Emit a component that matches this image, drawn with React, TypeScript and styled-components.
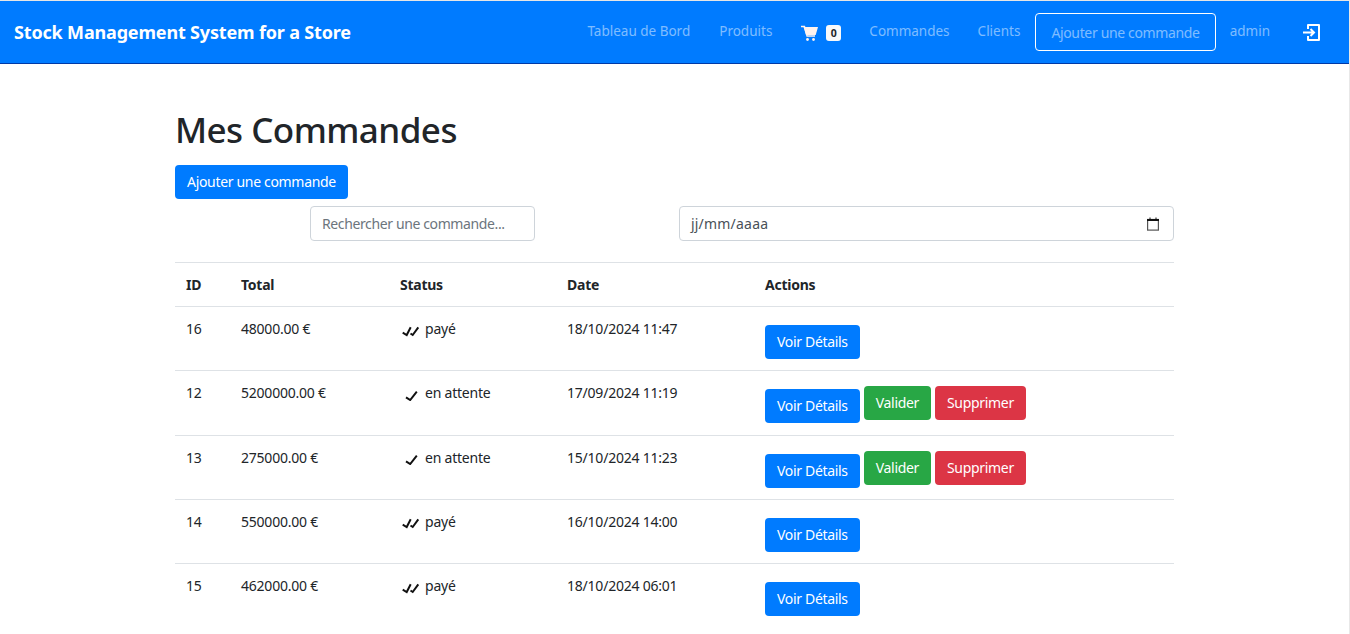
import React from "react";
import styled, { createGlobalStyle } from "styled-components";

type Order = {
  id: number;
  total: string;
  paid: boolean;
  date: string;
};

const orders: Array<Order> = [
  { id: 16, total: "48000.00 €", paid: true, date: "18/10/2024 11:47" },
  { id: 12, total: "5200000.00 €", paid: false, date: "17/09/2024 11:19" },
  { id: 13, total: "275000.00 €", paid: false, date: "15/10/2024 11:23" },
  { id: 14, total: "550000.00 €", paid: true, date: "16/10/2024 14:00" },
  { id: 15, total: "462000.00 €", paid: true, date: "18/10/2024 06:01" },
];

const GlobalStyle = createGlobalStyle`
  html, body {
    margin: 0;
    height: 634px;
    overflow: hidden;
    background: #fff;
  }
  body {
    font-family: "Noto Sans", "Open Sans", sans-serif;
    font-size: 14px;
    color: #212529;
    border-right: 1px solid #e8e8e8;
    border-top: 1px solid #e6e6e6;
    box-sizing: border-box;
  }
`;

const Navbar = styled.nav`
  display: flex;
  align-items: center;
  height: 62px;
  padding: 0 14px;
  background: #007bff;
  border-bottom: 1px solid #0039a6;
`;

const Brand = styled.a`
  font-size: 18px;
  font-weight: 700;
  letter-spacing: -0.17px;
  color: #fff;
  margin-right: auto;
`;

const NavLink = styled.a<{ $pull?: number }>`
  color: rgba(255, 255, 255, 0.5);
  font-size: 13.5px;
  margin-bottom: 3px;
  margin-left: ${(props) => props.$pull || 0}px;
`;

const CartLink = styled.span`
  display: flex;
  align-items: center;
  gap: 8px;
  margin-top: 2px;
`;

const Badge = styled.span`
  background: #f8f9fa;
  color: #212529;
  font-size: 10.5px;
  font-weight: 700;
  border-radius: 3px;
  width: 15px;
  height: 16px;
  display: flex;
  align-items: center;
  justify-content: center;
`;

const NavItems = styled.div`
  display: flex;
  align-items: center;
  gap: 29px;
`;

const OutlineButton = styled.a`
  color: rgba(255, 255, 255, 0.5);
  letter-spacing: -0.35px;
  border: 1px solid #fff;
  border-radius: 4px;
  padding: 0 15px;
  height: 36px;
  display: flex;
  align-items: center;
  margin-left: -14px;
  margin-right: -15px;
`;

const LoginLink = styled.span`
  display: flex;
  margin-left: 4px;
  margin-right: 15px;
`;

const Main = styled.main`
  margin-left: 175px;
  width: 999px;
`;

const Title = styled.h1`
  font-size: 35px;
  font-weight: 500;
  letter-spacing: -0.55px;
  line-height: 43px;
  margin: 44px 0 14px;
`;

const Button = styled.button<{ $color: string; $top?: number }>`
  background: ${(props) => props.$color};
  color: #fff;
  border: 0;
  border-radius: 4px;
  height: 34px;
  padding: 0 12px 1px;
  font: inherit;
  letter-spacing: -0.32px;
  margin-top: ${(props) => props.$top || 0}px;
`;

const Filters = styled.div`
  display: flex;
  margin-top: 7px;
  margin-bottom: 21px;
`;

const SearchInput = styled.input`
  box-sizing: border-box;
  width: 225px;
  height: 35px;
  margin-left: 135px;
  margin-right: 144px;
  padding: 0 11px;
  border: 1px solid #ced4da;
  border-radius: 4px;
  font: inherit;
  letter-spacing: -0.38px;
  &::placeholder {
    color: #6c757d;
  }
`;

const DateBox = styled.div`
  box-sizing: border-box;
  flex: 1;
  height: 35px;
  display: flex;
  align-items: center;
  justify-content: space-between;
  padding: 0 14px 0 11px;
  border: 1px solid #ced4da;
  border-radius: 4px;
  color: #495057;
  letter-spacing: 0.2px;
`;

const Table = styled.table`
  width: 100%;
  border-collapse: collapse;
  table-layout: fixed;
  & th {
    text-align: left;
    font-weight: 700;
    letter-spacing: -0.25px;
    height: 43px;
    padding: 0 11px;
    border-top: 1px solid #dee2e6;
  }
  & td {
    vertical-align: top;
    height: 64.25px;
    padding: 12px 11px 0;
    box-sizing: border-box;
    border-top: 1px solid #dee2e6;
    letter-spacing: -0.22px;
  }
`;

const StatusCell = styled.div`
  display: flex;
  align-items: center;
  gap: 5px;
`;

const Actions = styled.div`
  display: flex;
  align-items: flex-start;
  gap: 4px;
`;

const CartIcon: React.FC = () => (
  <svg width="17" height="17" viewBox="0 0 17 17">
    <path d="M0 1.500h3.500L6 11h8" fill="none" stroke="#fff3ee" strokeWidth="1.300" />
    <path d="M2.500 2H17l-2.300 8H5z" fill="#fff3ee" />
    <circle cx="6.500" cy="14.500" r="1.400" fill="#fff3ee" />
    <circle cx="12.500" cy="14.500" r="1.400" fill="#fff3ee" />
  </svg>
);

const LoginIcon: React.FC = () => (
  <svg width="17" height="17" viewBox="0 0 17 17" fill="none" stroke="#fff" strokeWidth="2">
    <path d="M5 5V1h11v15H5v-4" strokeLinejoin="round" />
    <path d="M0 8.500h11M7.500 5l3.500 3.500L7.500 12" />
  </svg>
);

const CheckIcon: React.FC<{ paid: boolean }> = ({ paid }) => (
  <svg width="20" height="16" viewBox="0 0 20 16" fill="none" stroke="#111" strokeWidth="2">
    {paid ? (
      <>
        <path d="M2.700 11.700L6.700 14l4-7.700" />
        <path d="M10.500 12.500L12.700 14l5.600-7.700" />
      </>
    ) : (
      <path d="M6 12.300L10.200 15l6.600-8.300" />
    )}
  </svg>
);

const CalendarIcon: React.FC = () => (
  <svg width="12" height="14" viewBox="0 0 12 14" fill="none">
    <rect x="0.600" y="2.500" width="10.800" height="10.600" stroke="#555" strokeWidth="1.200" />
    <rect x="0" y="2" width="12" height="2" fill="#111" />
    <path d="M3 0.500v2M9 0.500v2" stroke="#111" />
  </svg>
);

const App: React.FC = () => {
  return (
    <>
      <GlobalStyle />
      <Navbar>
        <Brand>Stock Management System for a Store</Brand>
        <NavItems>
          <NavLink>Tableau de Bord</NavLink>
          <NavLink>Produits</NavLink>
          <CartLink>
            <CartIcon />
            <Badge>0</Badge>
          </CartLink>
          <NavLink $pull={-1}>Commandes</NavLink>
          <NavLink $pull={-1}>Clients</NavLink>
          <OutlineButton>Ajouter une commande</OutlineButton>
          <NavLink>admin</NavLink>
          <LoginLink>
            <LoginIcon />
          </LoginLink>
        </NavItems>
      </Navbar>
      <Main>
        <Title>Mes Commandes</Title>
        <Button $color="#007bff">Ajouter une commande</Button>
        <Filters>
          <SearchInput placeholder="Rechercher une commande..." />
          <DateBox>
            <span>jj/mm/aaaa</span>
            <CalendarIcon />
          </DateBox>
        </Filters>
        <Table>
          <colgroup>
            <col width="55" />
            <col width="159" />
            <col width="167" />
            <col width="198" />
            <col />
          </colgroup>
          <thead>
            <tr>
              <th>ID</th>
              <th>Total</th>
              <th>Status</th>
              <th>Date</th>
              <th>Actions</th>
            </tr>
          </thead>
          <tbody>
            {orders.map((o) => (
              <tr key={o.id}>
                <td>{o.id}</td>
                <td>{o.total}</td>
                <td>
                  <StatusCell>
                    <CheckIcon paid={o.paid} />
                    {o.paid ? "payé" : "en attente"}
                  </StatusCell>
                </td>
                <td>{o.date}</td>
                <td>
                  <Actions>
                    <Button $color="#007bff" $top={6}>Voir Détails</Button>
                    {!o.paid ? <Button $color="#28a745" $top={3}>Valider</Button> : null}
                    {!o.paid ? <Button $color="#dc3545" $top={3}>Supprimer</Button> : null}
                  </Actions>
                </td>
              </tr>
            ))}
          </tbody>
        </Table>
      </Main>
    </>
  );
};

export default App;
